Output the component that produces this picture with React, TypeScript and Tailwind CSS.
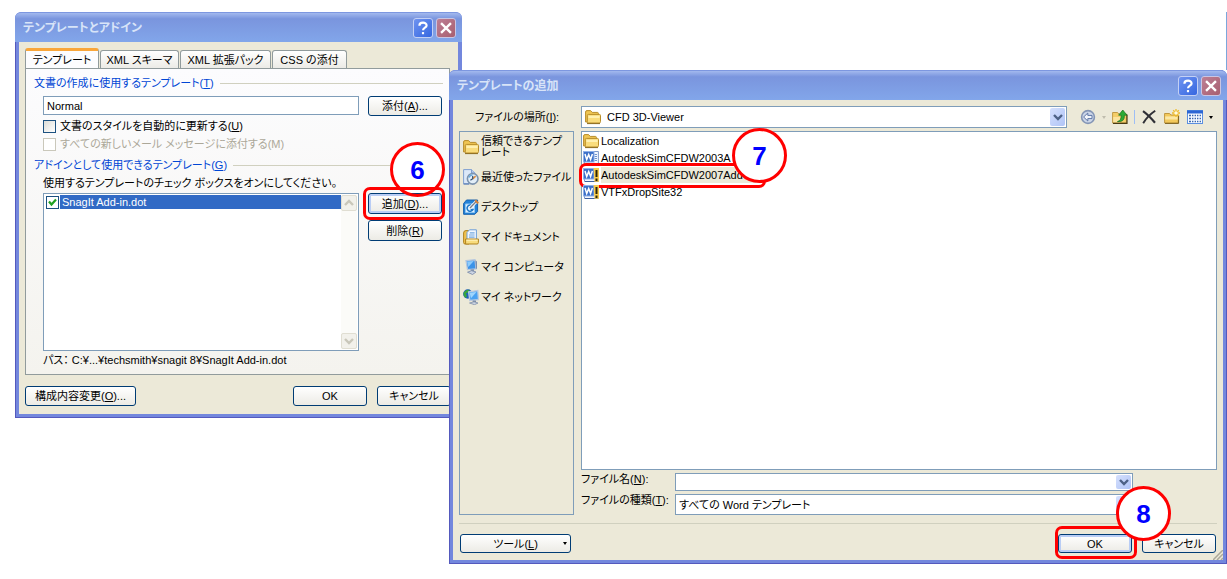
import type { ReactNode } from 'react';

const buttonClass =
  "flex items-center justify-center rounded-[3px] border border-[#003c74] bg-linear-to-b from-white to-[#ecebe5] text-black";

function TitleBar({ title, help, close }: { title: string; help: string; close: string }) {
  return (
    <header className="flex h-[30px] items-center gap-[3px] rounded-t-[6px] border-t border-[#7d97e0] bg-linear-to-b from-[#a3b9ee] via-[#7a95de] via-20% to-[#82a6ea] pr-[6px] pl-2">
      <h1 className="min-w-0 flex-1 truncate text-[12px] font-bold text-[#d8e4f8]">{title}</h1>
      <button
        type="button"
        aria-label={help}
        className="flex size-5 items-center justify-center rounded-[3px] border border-[#c3d0f5] bg-linear-to-br from-[#6f93f0] to-[#3566e0] text-white"
      >
        <svg viewBox="0 0 20 20" className="size-5" fill="none" stroke="currentColor" strokeWidth="2.4">
          <path d="M6 7.5C6 3 14 3 14 7.2C14 9.8 10 9.6 10 12.6" />
          <path d="M8.8 15.7H11.2" />
        </svg>
      </button>
      <button
        type="button"
        aria-label={close}
        className="flex size-5 items-center justify-center rounded-[3px] border border-[#c9c5e2] bg-linear-to-br from-[#bd7f95] to-[#a85f70] text-white"
      >
        <svg viewBox="0 0 20 20" className="size-5" stroke="currentColor" strokeWidth="2.6">
          <path d="M4.5 4.5L15.5 15.5M15.5 4.5L4.5 15.5" />
        </svg>
      </button>
    </header>
  );
}

function Step({ n, className }: { n: number; className: string }) {
  return (
    <span
      className={`pointer-events-none absolute flex size-[55px] items-center justify-center rounded-full border-[3px] border-[#f00] text-[26px] font-bold text-[#00f] ${className}`}
    >
      {n}
    </span>
  );
}

function Ring({ className }: { className: string }) {
  return <span className={`pointer-events-none absolute rounded-[7px] border-[3px] border-[#f00] ${className}`} />;
}

function Chevron({ up = false }: { up?: boolean }) {
  return (
    <svg viewBox="0 0 10 8" className="h-2 w-[10px]" fill="none" stroke="currentColor" strokeWidth="2.4">
      <path d={up ? 'M1 6L5 2L9 6' : 'M1 2L5 6L9 2'} />
    </svg>
  );
}

function DropArrow() {
  return (
    <span className="pointer-events-none absolute inset-y-[2px] right-[2px] flex w-[15px] items-center justify-center rounded-[2px] bg-linear-to-br from-[#d5e0fd] to-[#b0c4f6] text-[#4d6185]">
      <Chevron />
    </span>
  );
}

function GroupTitle({ children }: { children: ReactNode }) {
  return (
    <div className="flex h-4 items-center gap-[6px] pr-[6px] pl-2">
      <h2 className="text-[#0046d5]">{children}</h2>
      <span className="h-px flex-1 bg-[#d0d0bf]" />
    </div>
  );
}

function FolderIcon() {
  return (
    <svg viewBox="0 0 16 16" className="size-4 shrink-0">
      <path d="M0.6 3Q0.6 1.6 2 1.6H5.6L7.2 3.4H12.4Q13.4 3.4 13.4 4.6V13H0.6Z" fill="#f0c653" stroke="#b88d2a" />
      <path d="M3.4 5.4H14.4Q15.5 5.4 15.5 6.6V12.6Q15.5 14 14.2 14H3.6Q2.3 14 2.3 12.6V6.6Q2.3 5.4 3.4 5.4Z" fill="#f9dc7c" stroke="#b88d2a" />
      <path d="M3.4 6.8H14.6V9H3.4Z" fill="#fff0b0" />
      <path d="M2 14.6H15" stroke="#8d6a1c" />
    </svg>
  );
}

function WordIcon({ macro = false }: { macro?: boolean }) {
  return (
    <svg viewBox="0 0 16 16" className="size-4 shrink-0">
      <path d="M5.5 1.5H15.4V14.5H1.5V10" fill="#f3f7fe" stroke="#7c97c9" />
      <path d="M11.5 4.5H14M11.5 6.5H14M11.5 8.5H14M11.5 10.5H14" stroke="#6f93cf" />
      <path d="M2 14.5H15" stroke="#3d5f9f" />
      <rect x="0.5" y="1.5" width="10.5" height="10.5" fill="#3d70c8" stroke="#8fb0ea" />
      <path d="M2 4L3.7 9.6L5.7 4.6L7.6 9.6L9.4 4" fill="none" stroke="#fff" strokeWidth="1.5" />
      {macro && (
        <>
          <path d="M10.6 1H16V14.8H11.4Z" fill="#f8cc4d" />
          <path d="M13.5 3V10M13.5 11.6V14" stroke="#2b2408" strokeWidth="2" />
        </>
      )}
    </svg>
  );
}

function RecentIcon() {
  return (
    <svg viewBox="0 0 16 16" className="size-4 shrink-0">
      <path d="M0.6 0.6H8.5L12 4V14.8H0.6Z" fill="#dce8f8" stroke="#7f9fd0" />
      <path d="M8.5 0.6V4H12" fill="#b9cdec" stroke="#7f9fd0" />
      <circle cx="9.7" cy="9.8" r="5.3" fill="#e2eef8" stroke="#7d93ac" strokeWidth="1.6" />
      <path d="M9.7 5.8A4 4 0 0 0 6 8.6" fill="none" stroke="#67abe0" strokeWidth="1.2" />
      <path d="M9.7 9.8L12.6 7.2" stroke="#e08c3c" strokeWidth="1.6" />
      <path d="M9.7 9.8L7.4 11.2M9.7 9.8V7" fill="none" stroke="#35506f" strokeWidth="1.2" />
      <path d="M0.6 15H6" stroke="#4d72b0" />
    </svg>
  );
}

function DesktopIcon() {
  return (
    <svg viewBox="0 0 16 16" className="size-4 shrink-0">
      <path d="M0.6 4.5L3.5 1H14.6V12.5L11.8 15.3H0.6Z" fill="#2382d8" stroke="#1a63ae" />
      <path d="M2.5 5H11.5V13.5H2.5Z" fill="#dff0ff" stroke="#8cc4f2" />
      <path d="M9.4 7A3.1 3.1 0 1 0 10 10.4H7.6" fill="none" stroke="#1d77c7" strokeWidth="1.5" />
      <path d="M7 9L13.2 2.6" stroke="#fff" strokeWidth="3" />
      <path d="M7 9L13.2 2.6" stroke="#7b7f89" strokeWidth="1.4" />
      <path d="M12.2 1.2L15.2 4.2" stroke="#d98238" strokeWidth="2" />
    </svg>
  );
}

function DocumentsIcon() {
  return (
    <svg viewBox="0 0 16 16" className="size-4 shrink-0">
      <path d="M0.6 4Q0.6 1.6 3 1.6H6V15H2Q0.6 15 0.6 13.4Z" fill="#f0c24e" stroke="#b1841f" />
      <path d="M4 11V3.5L6.5 0.8H13.4V11Z" fill="#f2f8ff" stroke="#6d9fd8" />
      <path d="M6.8 3.8H11.6M6 6H11.6M6 8.2H11.6" stroke="#73a8df" strokeWidth="1.2" />
      <path d="M2.6 10H15.4V13.6Q15.4 15 14 15H2.6Z" fill="#f8dc7d" stroke="#b1841f" />
      <path d="M3.4 11.2H14.6" stroke="#fff3c0" />
    </svg>
  );
}

function ComputerIcon() {
  return (
    <svg viewBox="0 0 16 16" className="size-4 shrink-0">
      <path d="M3 1.6L12 0.8L13 9.8L4.5 10.6Z" fill="#3c93e8" stroke="#b5c7df" strokeWidth="1.3" />
      <path d="M4 2.4L10.8 1.9L5.3 8Z" fill="#8ecbfb" />
      <path d="M12.4 1.2L14 2.4V9.6L13 10Z" fill="#7c8fae" />
      <path d="M7.5 10.6L10.8 10.2L11.3 12.4H8Z" fill="#8292ac" />
      <path d="M4.5 13.2L8.5 11.7L13 13L9.5 15.5Z" fill="#cbd4e3" stroke="#8090ab" strokeWidth="0.9" />
    </svg>
  );
}

function NetworkIcon() {
  return (
    <svg viewBox="0 0 16 16" className="size-4 shrink-0">
      <circle cx="4.8" cy="5" r="4.7" fill="#2060bd" />
      <path d="M0.8 3.2Q3 0 6.4 0.8L5 3.4L2.8 4.4L4 7L2.6 9Q-0.4 6.4 0.8 3.2Z" fill="#39a53d" />
      <path d="M5.6 2.8L14.8 1.6L15.5 10.6L6.8 11.5Z" fill="#49a2f2" stroke="#bccbe0" strokeWidth="1.3" />
      <path d="M6.6 3.8L13.4 3L8 9.2Z" fill="#9ed5fd" />
      <path d="M9.8 11.5H12.8L13.2 13.2H9.6Z" fill="#7989a4" />
      <path d="M6.5 14L11 12.8L15 14L11.5 15.7Z" fill="#cdd5e3" stroke="#7f8fa9" strokeWidth="0.8" />
    </svg>
  );
}

function BackIcon() {
  return (
    <svg viewBox="0 0 16 16" className="size-4">
      <circle cx="8" cy="8" r="6.4" fill="#ccd6e8" stroke="#8495b5" strokeWidth="1.6" />
      <path d="M3.6 8L7.8 4V6.4H12V9.6H7.8V12Z" fill="#f2f5fa" stroke="#5d75a5" />
    </svg>
  );
}

function UpFolderIcon() {
  return (
    <svg viewBox="0 0 16 16" className="size-4">
      <path d="M0.6 3.5H5.6L6.8 5H14.4V14H0.6Z" fill="#f5cd68" stroke="#c19a45" />
      <path d="M1.2 8H8V13.4H1.2Z" fill="#fbe39d" />
      <path d="M1 14.4H15V5.5" fill="none" stroke="#4a3a12" strokeWidth="1.2" />
      <path d="M5.4 12.6Q9.4 11.6 9.2 6.2H6.6L10.8 1L15 6.2H12.4Q12.8 13.4 5.4 12.6Z" fill="#2bab37" stroke="#17701f" strokeWidth="0.7" />
    </svg>
  );
}

function DeleteIcon() {
  return (
    <svg viewBox="0 0 16 16" className="size-4" fill="none" stroke="#303036">
      <path d="M2 2.2Q7 5.6 14 13.8" strokeWidth="2.2" />
      <path d="M14.2 1.8Q6.5 7 2.2 14.2" strokeWidth="1.9" />
    </svg>
  );
}

function NewFolderIcon() {
  return (
    <svg viewBox="0 0 16 16" className="size-4">
      <path d="M0.6 4.5H5.6L6.8 6H14.2V14H0.6Z" fill="#f3c95b" stroke="#c1983f" />
      <path d="M1.2 7.4H13.6V10.5H1.2Z" fill="#fbe8a6" />
      <path d="M1 14.4H14.6V6.5" fill="none" stroke="#7d601c" />
      <path d="M12 0V8M8 4H16M9.2 1.2L14.8 6.8M14.8 1.2L9.2 6.8" stroke="#eebb2a" strokeWidth="1.3" />
      <circle cx="12" cy="4" r="1.8" fill="#fffbe0" />
    </svg>
  );
}

function ViewsIcon() {
  return (
    <svg viewBox="0 0 16 16" className="size-4">
      <rect x="0.5" y="1.5" width="15" height="13" fill="#f8fbff" stroke="#5b8fe0" />
      <path d="M0 3H16" stroke="#2c66d4" strokeWidth="3" />
      <path d="M2 6.5H4M5 6.5H6.4M7.6 6.5H9M10 6.5H11.4M12.6 6.5H14M2 9.5H4M5 9.5H6.4M7.6 9.5H9M10 9.5H11.4M12.6 9.5H14M2 12.5H4M5 12.5H6.4M7.6 12.5H9M10 12.5H11.4M12.6 12.5H14" stroke="#3a67ae" strokeWidth="1.6" />
    </svg>
  );
}

const tabs = ['テンプレート', 'XML スキーマ', 'XML 拡張パック', 'CSS の添付'];

const tabWidths = ['w-[74px]', 'w-[79px]', 'w-[91px]', 'w-[75px]'];

function AddInsWindow() {
  return (
    <section className="absolute top-3 left-[15px] w-[447px] rounded-t-[7px] bg-[#7387dd] shadow-[inset_1px_-1px_0_#5459bd]">
      <TitleBar title="テンプレートとアドイン" help="ヘルプ" close="閉じる" />
      <div className="mx-1 bg-[#ece9d8] pt-[6px] pr-2 pb-2 pl-[6px]">
        <div role="tablist" className="flex h-5 items-end gap-px">
          {tabs.map((tab, i) => (
            <button
              key={tab}
              type="button"
              role="tab"
              aria-selected={i === 0}
              className={`rounded-t-[3px] border border-b-0 border-[#919b9c] whitespace-nowrap ${tabWidths[i]} ${
                i === 0
                  ? 'h-5 border-t-[3px] border-t-[#f9a63a] bg-[#fcfcfe]'
                  : 'h-[18px] bg-linear-to-b from-white to-[#ecebe6]'
              }`}
            >
              {tab}
            </button>
          ))}
        </div>
        <div className="h-[307px] border border-[#919b9c] bg-linear-to-b from-[#fcfcfe] to-[#f4f3ee] pt-[6px]">
          <GroupTitle>
            文書の作成に使用するテンプレート(<u>T</u>)
          </GroupTitle>
          <div className="mt-[5px] flex gap-[9px] pr-[7px] pl-[17px]">
            <input
              aria-label="文書の作成に使用するテンプレート"
              defaultValue="Normal"
              className="h-[19px] min-w-0 flex-1 border border-[#7f9db9] bg-white px-[3px] text-[11px]"
            />
            <button type="button" className={`${buttonClass} h-5 w-[74px]`}>
              添付(<u>A</u>)...
            </button>
          </div>
          <div className="mt-px pl-[17px]">
            <label className="flex h-[18px] items-center gap-1">
              <input type="checkbox" className="size-[13px] appearance-none border border-[#1c5180] bg-linear-to-br from-[#dcdcd7] to-white" />
              <span>
                文書のスタイルを自動的に更新する(<u>U</u>)
              </span>
            </label>
            <label className="flex h-[18px] items-center gap-1 text-[#aca899]">
              <input type="checkbox" disabled className="size-[13px] appearance-none border border-[#cac8bb] bg-white" />
              <span>すべての新しいメール メッセージに添付する(M)</span>
            </label>
          </div>
          <div className="pt-1">
            <GroupTitle>
              アドインとして使用できるテンプレート(<u>G</u>)
            </GroupTitle>
          </div>
          <p className="mt-[2px] h-4 pl-[17px] leading-4">使用するテンプレートのチェック ボックスをオンにしてください。</p>
          <div className="mt-[2px] flex gap-[9px] pr-[7px] pl-[17px]">
            <div className="flex h-[158px] min-w-0 flex-1 border border-[#7f9db9] bg-white p-px">
              <div className="flex-1">
                <label className="flex h-[14px] items-center text-[11px] text-white">
                  <span className="relative mx-px flex size-[13px]">
                    <input type="checkbox" defaultChecked className="size-[13px] appearance-none border border-[#1c5180] bg-white" />
                    <svg viewBox="0 0 13 13" className="pointer-events-none absolute size-[13px]" fill="none" stroke="#21a121" strokeWidth="2.2">
                      <path d="M3 5.5L5.5 8.5L10 3.5" />
                    </svg>
                  </span>
                  <span className="h-[14px] flex-1 bg-[#316ac5] pl-[2px] leading-[14px]">SnagIt Add-in.dot</span>
                </label>
              </div>
              <div className="flex w-4 flex-col justify-between bg-[#fbfbf8] text-[#c9c7ba]">
                <span className="flex h-4 items-center justify-center rounded-[2px] border border-[#e0ded2] bg-[#f2f1eb]">
                  <Chevron up />
                </span>
                <span className="flex h-4 items-center justify-center rounded-[2px] border border-[#e0ded2] bg-[#f2f1eb]">
                  <Chevron />
                </span>
              </div>
            </div>
            <div className="flex w-[74px] flex-col gap-[6px]">
              <div className="relative">
                <span className="absolute -top-[51px] left-[22px] size-[55px] rounded-full bg-white" />
                <button type="button" className={`${buttonClass} relative h-[21px] w-full shadow-[inset_0_0_0_2px_#b9cdf5]`}>
                  追加(<u>D</u>)...
                </button>
                <Ring className="-top-[6px] -right-[3px] -bottom-[6px] -left-[5px]" />
                <Step n={6} className="-top-[51px] left-[22px]" />
              </div>
              <button type="button" className={`${buttonClass} h-[21px]`}>
                削除(<u>R</u>)
              </button>
            </div>
          </div>
          <p className="pt-px pl-[17px] text-[11px] leading-4">パス： C:¥...¥techsmith¥snagit 8¥SnagIt Add-in.dot</p>
        </div>
        <div className="-mr-2 flex gap-[10px] pt-[11px] pr-[7px]">
          <button type="button" className={`${buttonClass} h-5 w-[111px]`}>
            構成内容変更(<u>O</u>)...
          </button>
          <button type="button" className={`${buttonClass} ml-auto h-5 w-[74px] text-[11px]`}>
            OK
          </button>
          <button type="button" className={`${buttonClass} h-5 w-[74px]`}>
            キャンセル
          </button>
        </div>
      </div>
      <div className="h-1" />
    </section>
  );
}

const places = [
  { label: '信頼できるテンプレート', icon: <FolderIcon />, wrap: true },
  { label: '最近使ったファイル', icon: <RecentIcon /> },
  { label: 'デスクトップ', icon: <DesktopIcon /> },
  { label: 'マイ ドキュメント', icon: <DocumentsIcon /> },
  { label: 'マイ コンピュータ', icon: <ComputerIcon /> },
  { label: 'マイ ネットワーク', icon: <NetworkIcon /> },
];

const files = [
  { name: 'Localization', icon: <FolderIcon /> },
  { name: 'AutodeskSimCFDW2003A', icon: <WordIcon /> },
  { name: 'AutodeskSimCFDW2007Add', icon: <WordIcon macro />, selected: true },
  { name: 'VTFxDropSite32', icon: <WordIcon macro /> },
];

const selectClass = 'w-full appearance-none border border-[#7f9db9] bg-white';

function AddTemplateWindow() {
  return (
    <section className="absolute top-[70px] right-0 left-[449px] rounded-t-[7px] bg-[#7387dd] shadow-[inset_1px_-1px_0_#5459bd,inset_-1px_0_0_#5459bd]">
      <TitleBar title="テンプレートの追加" help="ヘルプ" close="閉じる" />
      <div className="relative mx-1 bg-[#ece9d8] px-[6px] pt-[6px] pb-[7px]">
        <div className="flex items-center">
          <label htmlFor="location" className="w-[122px] pl-4">
            ファイルの場所(<u>I</u>):
          </label>
          <div className="relative mr-[13px] min-w-0 flex-1">
            <select id="location" className={`${selectClass} h-[22px] pl-[25px] text-[11px]`}>
              <option>CFD 3D-Viewer</option>
            </select>
            <span className="pointer-events-none absolute top-[3px] left-1">
              <FolderIcon />
            </span>
            <DropArrow />
          </div>
          <div className="flex w-[137px] items-center">
            <button type="button" aria-label="戻る">
              <BackIcon />
            </button>
            <span className="ml-[6px] border-x-[2px] border-t-[3px] border-x-transparent border-t-[#c0bdae]" />
            <button type="button" aria-label="1 つ上のフォルダへ" className="ml-[6px]">
              <UpFolderIcon />
            </button>
            <span className="mx-[6px] h-[14px] w-px bg-[#9ebef5]" />
            <button type="button" aria-label="削除">
              <DeleteIcon />
            </button>
            <button type="button" aria-label="新しいフォルダ" className="ml-[7px]">
              <NewFolderIcon />
            </button>
            <button type="button" aria-label="表示" className="ml-[7px] flex items-center gap-[6px]">
              <ViewsIcon />
              <span className="border-x-[2px] border-t-[3px] border-x-transparent border-t-black" />
            </button>
          </div>
        </div>

        <div className="mt-[3px] flex gap-[7px]">
          <nav className="w-[115px] shrink-0 border border-[#7f9db9]">
            {places.map((place) => (
              <button key={place.label} type="button" className="flex h-[30px] w-full items-center gap-[2px] pl-[3px] text-left leading-[11px]">
                {place.icon}
                <span className={`shrink-0 ${place.wrap ? 'w-[86px]' : 'whitespace-nowrap'}`}>{place.label}</span>
              </button>
            ))}
          </nav>
          <div className="min-w-0 flex-1">
            <ul className="h-[339px] border border-[#7f9db9] bg-white text-[11px]">
              {files.map((file) => (
                <li key={file.name} className="relative flex h-[17px] items-center gap-[2px] pl-px">
                  {file.icon}
                  <span className={`leading-4 ${file.selected ? 'w-[155px] bg-[#ece9d8]' : ''}`}>{file.name}</span>
                  {file.selected && (
                    <>
                      <Ring className="-top-[3px] -left-[3px] h-[25px] w-[187px]" />
                      <Step n={7} className="-top-[38px] left-[150px] bg-white" />
                    </>
                  )}
                </li>
              ))}
            </ul>
            <div className="mr-[84px] flex flex-col gap-[3px] pt-[3px]">
              <div className="flex">
                <label htmlFor="filename" className="w-[94px] leading-3">
                  ファイル名(<u>N</u>):
                </label>
                <div className="relative min-w-0 flex-1">
                  <input id="filename" type="text" className={`${selectClass} block h-[18px] px-1 text-[11px]`} />
                  <DropArrow />
                </div>
              </div>
              <div className="flex">
                <label htmlFor="filetype" className="w-[94px] leading-3">
                  ファイルの種類(<u>T</u>):
                </label>
                <div className="relative min-w-0 flex-1">
                  <select id="filetype" className={`${selectClass} block h-[21px] px-[3px]`}>
                    <option>すべての Word テンプレート</option>
                  </select>
                  <DropArrow />
                </div>
              </div>
            </div>
          </div>
        </div>

        <div className="mt-2 flex gap-[10px] border-t border-[#d0d0bf] pt-[10px] pr-px pl-px">
          <button type="button" className={`${buttonClass} relative h-[19px] w-[111px]`}>
            ツール(<u>L</u>)
            <span className="absolute right-[3px] border-x-[2px] border-t-[3px] border-x-transparent border-t-black" />
          </button>
          <div className="relative z-10 ml-auto">
            <button type="button" className={`${buttonClass} h-[19px] w-[74px] text-[11px] shadow-[inset_0_0_0_2px_#b9cdf5]`}>
              OK
            </button>
            <Ring className="-top-2 -right-[5px] -bottom-[6px] -left-[3px]" />
            <Step n={8} className="-top-[48px] left-[58px] bg-white" />
          </div>
          <button type="button" className={`${buttonClass} h-[19px] w-[74px]`}>
            キャンセル
          </button>
        </div>
        <svg viewBox="0 0 10 10" className="absolute right-0 bottom-0 size-[10px]" stroke="#aba899" strokeWidth="1.5">
          <path d="M0 10L10 0M4 10L10 4M8 10L10 8" />
        </svg>
      </div>
      <div className="h-1" />
    </section>
  );
}

export default function App() {
  return (
    <main className="relative min-h-screen overflow-hidden bg-white font-['Liberation_Sans','Noto_Sans_CJK_JP',sans-serif] text-[11px] leading-4 text-black [font-feature-settings:'palt']">
      <span className="absolute top-3 right-0 h-[58px] w-px bg-[#7ba7dc]" />
      <AddInsWindow />
      <AddTemplateWindow />
    </main>
  );
}
